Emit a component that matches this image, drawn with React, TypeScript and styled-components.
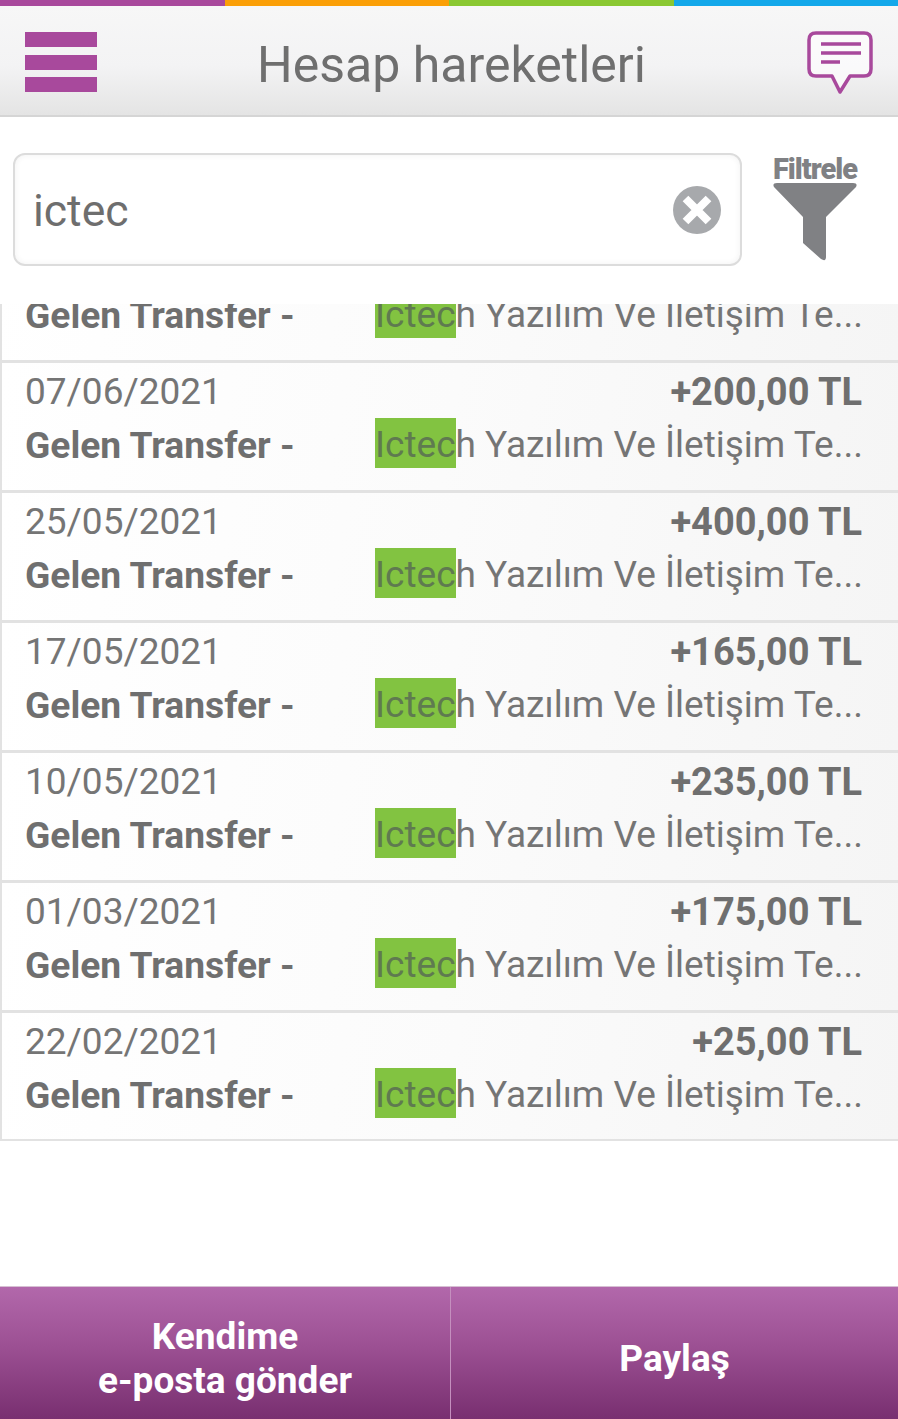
import * as React from "react";
import styled, { createGlobalStyle } from "styled-components";

const GlobalStyle = createGlobalStyle`
    html, body {
        margin: 0;
        padding: 0;
        background: #fff;
    }
    * {
        box-sizing: border-box;
    }
`;

const Page = styled.div`
    width: 898px;
    height: 1419px;
    display: flex;
    flex-direction: column;
    overflow: hidden;
    background: #fff;
    font-family: Roboto, "Liberation Sans", sans-serif;
    color: #6f6f6f;
`;

const ColorStrip = styled.div`
    height: 6px;
    display: flex;
    flex: none;
`;

const ColorSegment = styled.div<{ $color: string }>`
    flex: 1;
    background: ${(p) => p.$color};
`;

const Header = styled.header`
    height: 111px;
    flex: none;
    display: flex;
    align-items: center;
    justify-content: space-between;
    padding: 4px 25px 0 25px;
    background: linear-gradient(#f7f7f7 0%, #f3f3f4 55%, #e4e4e4 100%);
    border-bottom: 2px solid #d5d5d5;
`;

const MenuButton = styled.div`
    width: 72px;
    height: 60px;
    margin-top: -1px;
    display: flex;
    flex-direction: column;
    justify-content: space-between;
`;

const MenuBar = styled.span`
    display: block;
    height: 15px;
    background: #a8499c;
`;

const Title = styled.h1`
    margin: 4px 0 0 -1px;
    font-size: 50px;
    line-height: 56px;
    font-weight: 400;
    color: #6f6f6f;
`;

const SearchRow = styled.div`
    height: 187px;
    flex: none;
    display: flex;
    align-items: flex-start;
    padding: 36px 41px 0 13px;
    justify-content: space-between;
`;

const SearchBox = styled.div`
    width: 729px;
    height: 113px;
    display: flex;
    align-items: center;
    justify-content: space-between;
    padding: 0 19px 0 18px;
    background: #fff;
    border: 2px solid #dcdcdc;
    border-radius: 12px;
    box-shadow: inset 0 0 6px rgba(0, 0, 0, 0.06);
`;

const SearchText = styled.span`
    font-size: 44.5px;
    line-height: 52px;
    color: #6e6e6e;
    margin-top: 2px;
`;

const FilterButton = styled.div`
    width: 84px;
    display: flex;
    flex-direction: column;
    align-items: center;
`;

const FilterLabel = styled.span`
    font-size: 29px;
    line-height: 25px;
    margin-top: 4px;
    font-weight: 900;
    letter-spacing: -1px;
    color: #808184;
    white-space: nowrap;
`;

const Viewport = styled.div`
    height: 837px;
    flex: none;
    display: flex;
    flex-direction: column;
    justify-content: flex-end;
    overflow: hidden;
`;

const Row = styled.div`
    height: 130px;
    flex: none;
    padding: 0 36px 0 25px;
    background: linear-gradient(100deg, #fff 0%, #fbfbfb 50%, #f5f5f5 100%);
    border-left: 2px solid #e2e2e2;
    border-bottom: 3px solid #e2e2e2;

    &:last-child {
        height: 128px;
        border-bottom-width: 2px;
    }
`;

const RowTop = styled.div`
    height: 51px;
    display: flex;
    align-items: flex-end;
    justify-content: space-between;
`;

const DateText = styled.span`
    font-size: 37px;
    line-height: 44px;
    margin-left: -2px;
    color: #757575;
`;

const Amount = styled.span`
    font-size: 38px;
    line-height: 44px;
    font-weight: 700;
    color: #6f6f6f;
`;

const RowBottom = styled.div`
    height: 54px;
    margin-top: 3px;
    padding-top: 2px;
    display: flex;
    align-items: center;
    white-space: nowrap;
`;

const Kind = styled.span`
    width: 350px;
    margin-left: -2px;
    flex: none;
    font-size: 37.2px;
    font-weight: 700;
    color: #6f6f6f;
`;

const Description = styled.span`
    margin-bottom: 4px;
    font-size: 37px;
    color: #757575;
`;

const Mark = styled.mark`
    display: inline-block;
    height: 50px;
    line-height: 54px;
    background: #82c341;
    color: #5f7a50;
`;

const Spacer = styled.div`
    flex: 1;
`;

const Footer = styled.footer`
    height: 133px;
    flex: none;
    display: grid;
    grid-template-columns: 450px 448px;
    background: linear-gradient(#b268ab 0%, #9c5093 45%, #782f70 100%);
    border-top: 1px solid #d6c0d3;
`;

const FooterButton = styled.div<{ $divider?: boolean }>`
    display: flex;
    align-items: center;
    justify-content: center;
    text-align: center;
    padding-top: 11px;
    font-size: 37px;
    line-height: 44px;
    font-weight: 700;
    color: #fff;
    ${(p) => (p.$divider ? "border-left: 1px solid #c48fbe;" : "")}
`;

const strip = ["#a8499c", "#fb9f06", "#8ac832", "#14a8ea"];

// the first row is scrolled under the search bar, only its lower line shows
const rows = [
    { date: "", amount: "" },
    { date: "07/06/2021", amount: "+200,00 TL" },
    { date: "25/05/2021", amount: "+400,00 TL" },
    { date: "17/05/2021", amount: "+165,00 TL" },
    { date: "10/05/2021", amount: "+235,00 TL" },
    { date: "01/03/2021", amount: "+175,00 TL" },
    { date: "22/02/2021", amount: "+25,00 TL" },
];

const MessageIcon = () => (
    <svg width="66" height="64" viewBox="0 0 66 64">
        <path
            d="M9 2 H57 Q64 2 64 9 V38 Q64 45 57 45 H43 L33 61 L25 45 H9 Q2 45 2 38 V9 Q2 2 9 2 Z"
            fill="#fff"
            fillOpacity="0.6"
            stroke="#a8499c"
            strokeWidth="3.5"
            strokeLinejoin="round"
        />
        <path d="M14 13 H54 M14 22 H54 M14 31 H33" stroke="#a8499c" strokeWidth="3.5" fill="none" />
    </svg>
);

const ClearIcon = () => (
    <svg width="48" height="48" viewBox="0 0 48 48">
        <circle cx="24" cy="24" r="24" fill="#a7a9ac" />
        <path d="M12.5 12.5 L35.5 35.5 M35.5 12.5 L12.5 35.5" stroke="#fff" strokeWidth="8" />
    </svg>
);

const FunnelIcon = () => (
    <svg width="84" height="80" viewBox="0 0 84 80">
        <path
            d="M4 1 H80 Q85 1 83 5 L53 35 V75 Q53 80 48 77 L30 61 V35 L1 5 Q-1 1 4 1 Z"
            fill="#808184"
        />
    </svg>
);

export default function App() {
    return (
        <Page>
            <GlobalStyle />
            <ColorStrip>
                {strip.map((c) => (
                    <ColorSegment key={c} $color={c} />
                ))}
            </ColorStrip>
            <Header>
                <MenuButton>
                    <MenuBar />
                    <MenuBar />
                    <MenuBar />
                </MenuButton>
                <Title>Hesap hareketleri</Title>
                <MessageIcon />
            </Header>
            <SearchRow>
                <SearchBox>
                    <SearchText>ictec</SearchText>
                    <ClearIcon />
                </SearchBox>
                <FilterButton>
                    <FilterLabel>Filtrele</FilterLabel>
                    <FunnelIcon />
                </FilterButton>
            </SearchRow>
            <Viewport>
                {rows.map((r, i) => (
                    <Row key={i}>
                        <RowTop>
                            <DateText>{r.date}</DateText>
                            <Amount>{r.amount}</Amount>
                        </RowTop>
                        <RowBottom>
                            <Kind>Gelen Transfer -</Kind>
                            <Description>
                                <Mark>Ictec</Mark>h Yazılım Ve İletişim Te...
                            </Description>
                        </RowBottom>
                    </Row>
                ))}
            </Viewport>
            <Spacer />
            <Footer>
                <FooterButton>
                    Kendime
                    <br />
                    e-posta gönder
                </FooterButton>
                <FooterButton $divider>Paylaş</FooterButton>
            </Footer>
        </Page>
    );
}
